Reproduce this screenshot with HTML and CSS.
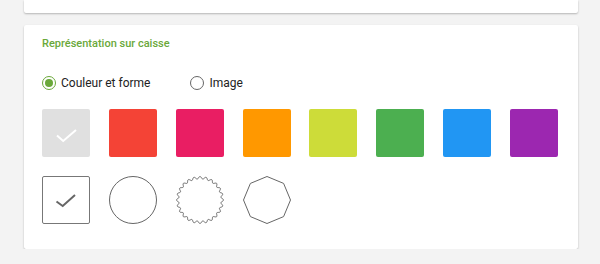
FILE: index.html
```html
<!DOCTYPE html>
<html lang="fr">
<head>
    <meta charset="UTF-8">
    <meta name="viewport" content="width=device-width, initial-scale=1.0">
    <title>Représentation sur caisse</title>
    <link rel="stylesheet" href="styles.css">
</head>
<body>
    <div class="page">
        <div class="card card-top"></div>

        <div class="card">
            <h2 class="card-title">Représentation sur caisse</h2>

            <div class="radios">
                <label class="radio checked"><span class="dot"></span>Couleur et forme</label>
                <label class="radio"><span class="dot"></span>Image</label>
            </div>

            <div class="grid">
                <div class="swatch gray selected">
                    <svg viewBox="0 0 48 48" width="48" height="48"><path d="M15 26.5 L21.2 32 L34 21" fill="none" stroke="#fff" stroke-width="2"/></svg>
                </div>
                <div class="swatch red"></div>
                <div class="swatch pink"></div>
                <div class="swatch orange"></div>
                <div class="swatch lime"></div>
                <div class="swatch green"></div>
                <div class="swatch blue"></div>
                <div class="swatch purple"></div>
            </div>

            <div class="grid shapes">
                <div class="shape square">
                    <svg viewBox="0 0 48 48" width="48" height="48"><path d="M14.5 25.5 L20.7 30 L33 19" fill="none" stroke="#666" stroke-width="2"/></svg>
                </div>
                <div class="shape">
                    <svg viewBox="0 0 48 48" width="48" height="48"><circle cx="24" cy="24" r="23.5" fill="none" stroke="#666" stroke-width="1"/></svg>
                </div>
                <div class="shape">
                    <svg viewBox="0 0 48 48" width="48" height="48"><path id="wavy" fill="none" stroke="#666" stroke-width="1"/></svg>
                </div>
                <div class="shape">
                    <svg viewBox="0 0 48 48" width="48" height="48"><polygon points="24,0.5 40.6,7.4 47.5,24 40.6,40.6 24,47.5 7.4,40.6 0.5,24 7.4,7.4" fill="none" stroke="#666" stroke-width="1"/></svg>
                </div>
            </div>
        </div>
    </div>

    <script>
        // scalloped circle outline
        const pts = [];
        for (let i = 0; i <= 360; i++) {
            const a = i * Math.PI / 180;
            const r = 22.3 + 1.2 * Math.cos(a * 24);
            pts.push((24 + r * Math.sin(a)).toFixed(2) + ' ' + (24 - r * Math.cos(a)).toFixed(2));
        }
        document.getElementById('wavy').setAttribute('d', 'M' + pts.join(' L') + 'Z');
    </script>
</body>
</html>
```

FILE: styles.css
```css
body {
    margin: 0;
    padding: 0;
    background-color: #f3f3f3;
    font-family: Roboto, "Liberation Sans", sans-serif;
    color: #222;
}
.page {
    padding: 0 22px 0 24px;
}
.card {
    background-color: #fff;
    border-radius: 2px;
    box-shadow: 0 1px 2px rgba(0, 0, 0, 0.25);
    padding: 11px 20px 25px 18px;
    margin-top: 12px;
}
.card-top {
    height: 13px;
    padding: 0;
    margin-top: 0;
    border-radius: 0 0 2px 2px;
}
.card-title {
    margin: 0;
    font-size: 11px;
    line-height: 16px;
    font-weight: 500;
    color: #6aa83a;
}
.radios {
    display: flex;
    gap: 40px;
    margin-top: 21px;
    height: 20px;
    align-items: center;
}
.radio {
    display: flex;
    align-items: center;
    gap: 5px;
    font-size: 12px;
    color: #222;
}
.dot {
    width: 12px;
    height: 12px;
    border: 1.5px solid #666;
    border-radius: 50%;
    display: flex;
    align-items: center;
    justify-content: center;
}
.radio.checked .dot {
    border-color: #6aa83a;
}
.radio.checked .dot::after {
    content: "";
    width: 8px;
    height: 8px;
    border-radius: 50%;
    background-color: #6aa83a;
}
.grid {
    display: grid;
    grid-template-columns: repeat(8, 48px);
    justify-content: space-between;
    margin-top: 16px;
}
.shapes {
    margin-top: 19px;
}
.swatch {
    width: 48px;
    height: 48px;
    border-radius: 2px;
}
.swatch svg,
.shape svg {
    display: block;
}
.gray { background-color: #e0e0e0; }
.red { background-color: #f44336; }
.pink { background-color: #e91e63; }
.orange { background-color: #ff9800; }
.lime { background-color: #cddc39; }
.green { background-color: #4caf50; }
.blue { background-color: #2196f3; }
.purple { background-color: #9c27b0; }
.shape {
    width: 48px;
    height: 48px;
}
.shape.square {
    box-sizing: border-box;
    border: 1px solid #777;
    border-radius: 2px;
}
.shape.square svg {
    margin: -1px;
}
```
